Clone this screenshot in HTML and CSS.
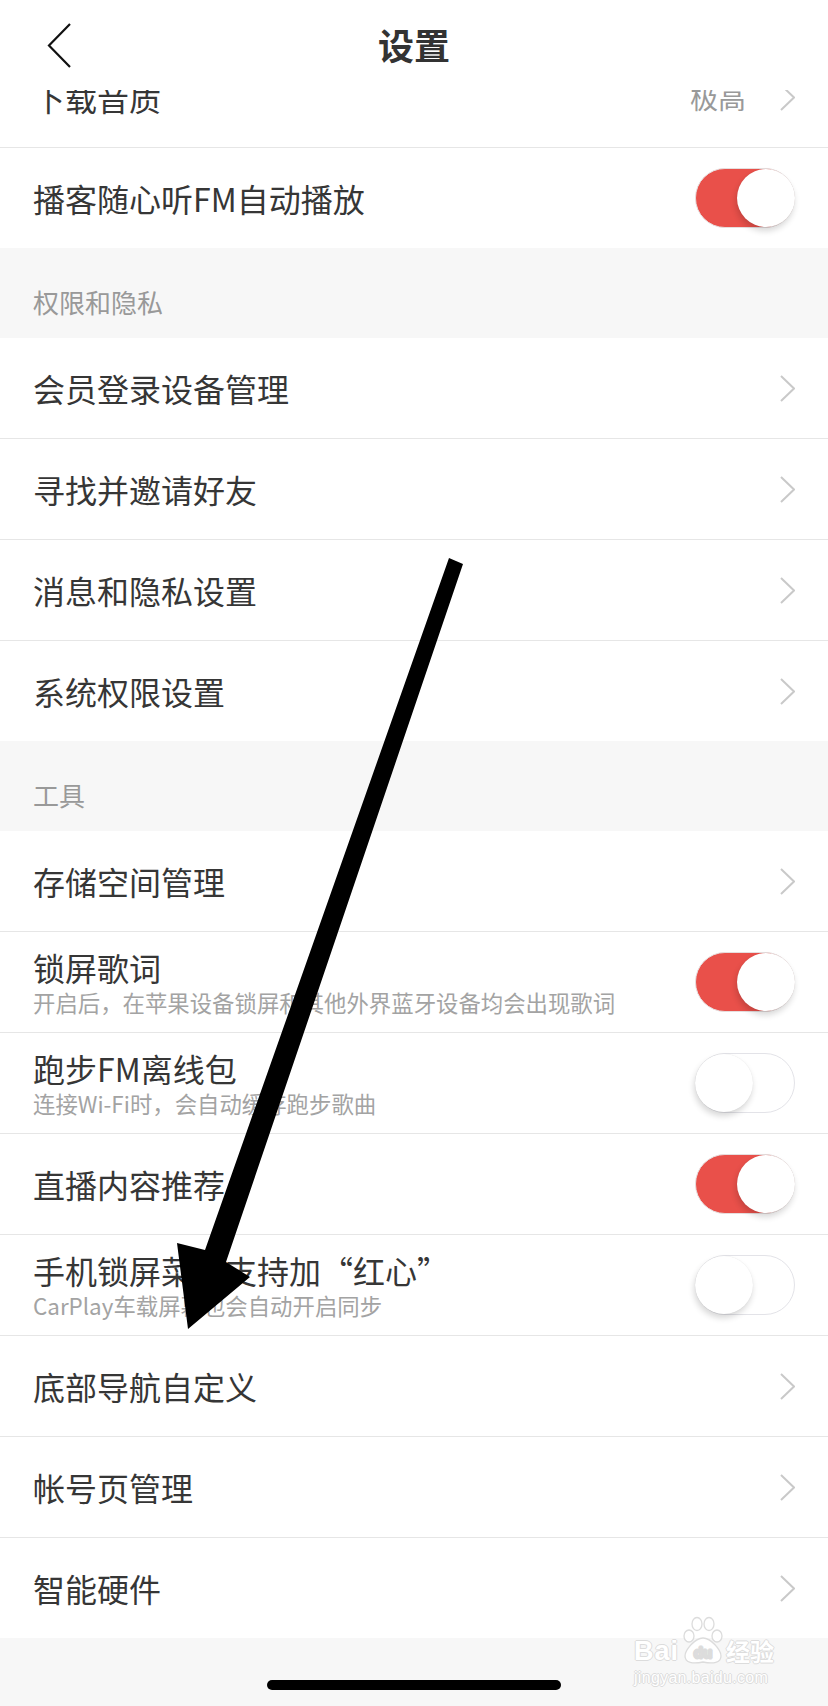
FILE: index.html
```html
<!DOCTYPE html>
<html lang="zh-CN">
<head>
    <meta charset="UTF-8">
    <meta name="viewport" content="width=device-width, initial-scale=1.0">
    <title>设置</title>
    <link rel="stylesheet" href="styles.css">
</head>
<body>
    <div class="page">
        <header class="topbar">
            <svg class="back" width="26" height="46" viewBox="0 0 26 46">
                <polyline points="23,1 2,22.5 23,44" fill="none" stroke="#111" stroke-width="2.2"/>
            </svg>
            <h1>设置</h1>
        </header>

        <div class="cut-row">
            <div class="row">
                <span class="label">下载音质</span>
                <span class="value">极高</span>
                <svg class="chev" width="15" height="27" viewBox="0 0 15 27"><polyline points="1,1 14,13.5 1,26"/></svg>
            </div>
        </div>

        <div class="group">
            <div class="row">
                <span class="label">播客随心听FM自动播放</span>
                <div class="switch on"><span class="knob"></span></div>
            </div>
        </div>

        <div class="section-title">权限和隐私</div>
        <div class="group">
            <div class="row">
                <span class="label">会员登录设备管理</span>
                <svg class="chev" width="15" height="27" viewBox="0 0 15 27"><polyline points="1,1 14,13.5 1,26"/></svg>
            </div>
            <div class="row">
                <span class="label">寻找并邀请好友</span>
                <svg class="chev" width="15" height="27" viewBox="0 0 15 27"><polyline points="1,1 14,13.5 1,26"/></svg>
            </div>
            <div class="row">
                <span class="label">消息和隐私设置</span>
                <svg class="chev" width="15" height="27" viewBox="0 0 15 27"><polyline points="1,1 14,13.5 1,26"/></svg>
            </div>
            <div class="row">
                <span class="label">系统权限设置</span>
                <svg class="chev" width="15" height="27" viewBox="0 0 15 27"><polyline points="1,1 14,13.5 1,26"/></svg>
            </div>
        </div>

        <div class="section-title">工具</div>
        <div class="group">
            <div class="row">
                <span class="label">存储空间管理</span>
                <svg class="chev" width="15" height="27" viewBox="0 0 15 27"><polyline points="1,1 14,13.5 1,26"/></svg>
            </div>
            <div class="row">
                <div class="text">
                    <span class="label">锁屏歌词</span>
                    <span class="sub">开启后，在苹果设备锁屏和其他外界蓝牙设备均会出现歌词</span>
                </div>
                <div class="switch on"><span class="knob"></span></div>
            </div>
            <div class="row">
                <div class="text">
                    <span class="label">跑步FM离线包</span>
                    <span class="sub">连接Wi-Fi时，会自动缓存跑步歌曲</span>
                </div>
                <div class="switch"><span class="knob"></span></div>
            </div>
            <div class="row">
                <span class="label">直播内容推荐</span>
                <div class="switch on"><span class="knob"></span></div>
            </div>
            <div class="row">
                <div class="text">
                    <span class="label">手机锁屏菜单支持加“红心”</span>
                    <span class="sub">CarPlay车载屏幕也会自动开启同步</span>
                </div>
                <div class="switch"><span class="knob"></span></div>
            </div>
            <div class="row">
                <span class="label">底部导航自定义</span>
                <svg class="chev" width="15" height="27" viewBox="0 0 15 27"><polyline points="1,1 14,13.5 1,26"/></svg>
            </div>
            <div class="row">
                <span class="label">帐号页管理</span>
                <svg class="chev" width="15" height="27" viewBox="0 0 15 27"><polyline points="1,1 14,13.5 1,26"/></svg>
            </div>
            <div class="row">
                <span class="label">智能硬件</span>
                <svg class="chev" width="15" height="27" viewBox="0 0 15 27"><polyline points="1,1 14,13.5 1,26"/></svg>
            </div>
        </div>

        <div class="bottom">
            <span class="home-bar"></span>
        </div>

        <!-- hand drawn annotation arrow on top of the screenshot -->
        <svg class="arrow" width="828" height="1706" viewBox="0 0 828 1706">
            <polygon points="449,558 463,564 226,1262 250,1277 188,1329 177,1243 205,1250" fill="#000"/>
        </svg>

        <div class="watermark">
            <div class="wm-top">
                <span class="wm-bai">Bai</span>
                <svg class="paw" width="44" height="50" viewBox="0 0 44 50">
                    <g fill="#fff" stroke="#dcdcdc" stroke-width="1.3">
                        <ellipse cx="8" cy="20" rx="5" ry="6"/>
                        <ellipse cx="16" cy="8" rx="5" ry="6.5"/>
                        <ellipse cx="28" cy="8" rx="5" ry="6.5"/>
                        <ellipse cx="36" cy="20" rx="5" ry="6"/>
                        <path d="M22,22 C30,22 40,34 40,40 C40,47 32,48 22,46 C12,48 4,47 4,40 C4,34 14,22 22,22 Z"/>
                    </g>
                    <text x="22" y="42" text-anchor="middle" class="paw-text">du</text>
                </svg>
                <span class="wm-cn">经验</span>
            </div>
            <div class="wm-url">jingyan.baidu.com</div>
        </div>
    </div>
</body>
</html>
```

FILE: styles.css
```css
body {
    margin: 0;
    padding: 0;
    background-color: #f7f7f7;
    font-family: "Noto Sans CJK SC", "Noto Sans", sans-serif;
    color: #333;
}
.page {
    width: 828px;
    height: 1706px;
    position: relative;
    overflow: hidden;
    background-color: #f7f7f7;
}
.topbar {
    height: 90px;
    background-color: #fff;
    display: flex;
    align-items: center;
    justify-content: center;
    position: relative;
    z-index: 2;
}
.topbar .back {
    position: absolute;
    left: 47px;
    top: 23px;
}
.topbar h1 {
    margin: 0;
    margin-top: -2px;
    font-size: 36px;
    font-weight: 700;
    color: #333;
    line-height: 1;
}
.cut-row {
    height: 57px;
    overflow: hidden;
    background-color: #fff;
    display: flex;
    flex-direction: column;
    justify-content: flex-end;
}
.cut-row .row {
    flex-shrink: 0;
}
.group {
    background-color: #fff;
}
.row {
    height: 100px;
    padding: 0 33px;
    display: flex;
    align-items: center;
    background-color: #fff;
}
.group .row + .row {
    border-top: 1px solid #e6e6e6;
}
.cut-row + .group .row {
    border-top: 1px solid #e6e6e6;
}
.label {
    font-size: 32px;
    line-height: 40px;
    color: #363636;
    flex: 1;
    white-space: nowrap;
}
.value {
    font-size: 28px;
    color: #999;
    margin-right: 34px;
}
.chev {
    flex-shrink: 0;
}
.chev polyline {
    fill: none;
    stroke: #c9c9c9;
    stroke-width: 2;
}
.text {
    flex: 1;
    display: flex;
    flex-direction: column;
}
.text .label {
    flex: none;
}
.sub {
    font-size: 22.4px;
    line-height: 30px;
    color: #a3a3a3;
    white-space: nowrap;
}
.switch {
    width: 100px;
    height: 60px;
    box-sizing: border-box;
    border: 1.5px solid #e3e3e8;
    border-radius: 30px;
    background-color: #fff;
    display: flex;
    align-items: center;
    justify-content: flex-start;
    flex-shrink: 0;
}
.switch.on {
    background-color: #e9504a;
    border-color: #e6dede;
    justify-content: flex-end;
}
.knob {
    width: 58px;
    height: 58px;
    margin: -1px;
    border-radius: 50%;
    background-color: #fff;
    box-shadow: -1px 4px 6px rgba(0, 0, 0, 0.16), 0 0 1px rgba(0, 0, 0, 0.1);
}
.section-title {
    height: 90px;
    box-sizing: border-box;
    padding: 36px 33px 0;
    font-size: 26px;
    line-height: 36px;
    color: #999;
}
.bottom {
    height: 68px;
    display: flex;
    justify-content: center;
    align-items: flex-start;
}
.home-bar {
    width: 294px;
    height: 10px;
    margin-top: 42px;
    border-radius: 5px;
    background-color: #000;
}
.arrow {
    position: absolute;
    top: 0;
    left: 0;
    pointer-events: none;
    z-index: 3;
}
.watermark {
    position: absolute;
    left: 634px;
    top: 1616px;
    width: 150px;
    z-index: 3;
    font-family: "Liberation Sans", "Noto Sans CJK SC", sans-serif;
    color: #fff;
    text-shadow: 1px 0 0 #dcdcdc, -1px 0 0 #dcdcdc, 0 1px 0 #dcdcdc, 0 -1px 0 #dcdcdc;
}
.wm-top {
    display: flex;
    align-items: flex-end;
    height: 50px;
}
.wm-bai {
    font-size: 27px;
    font-weight: 700;
    line-height: 30px;
    letter-spacing: 1px;
}
.paw {
    margin: 0 1px 0 2px;
}
.paw-text {
    font-size: 15px;
    font-weight: 700;
    fill: #fff;
    stroke: #dcdcdc;
    stroke-width: 0.8;
}
.wm-cn {
    font-size: 24px;
    line-height: 30px;
    font-family: "Noto Sans CJK SC", sans-serif;
    font-weight: 700;
}
.wm-url {
    font-size: 16px;
    line-height: 20px;
    margin-top: 2px;
    letter-spacing: 0.3px;
}
```
